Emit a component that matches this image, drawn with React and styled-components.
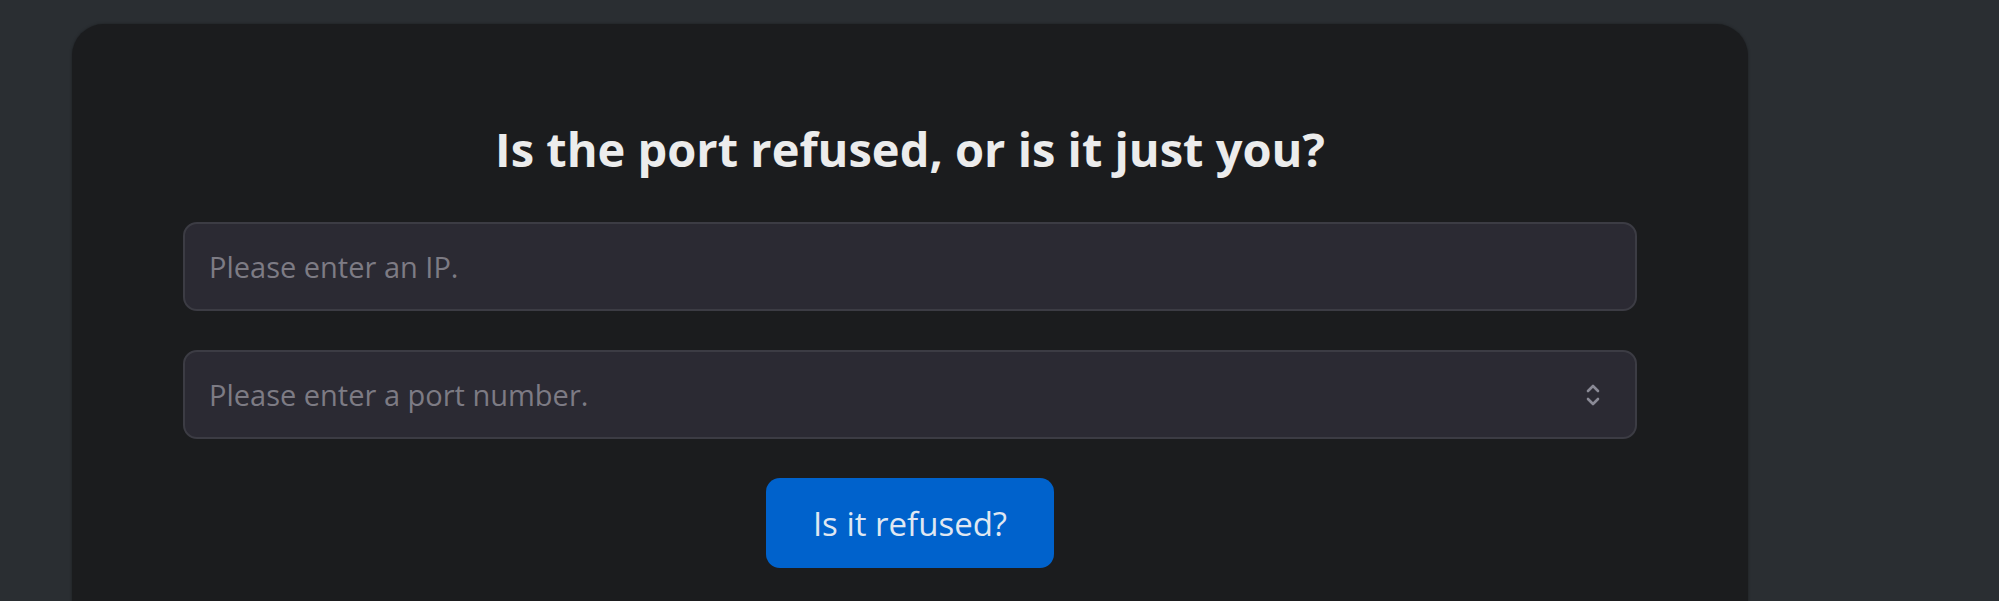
import React from 'react'
import styled, { createGlobalStyle } from 'styled-components'

const GlobalStyle = createGlobalStyle`
  html, body {
    margin: 0;
    padding: 0;
    background: #2a2e32;
    font-family: "Open Sans", "Noto Sans", sans-serif;
  }
`

const Page = styled.main`
  min-height: 601px;
  padding: 24px 251px 0 72px;
  box-sizing: border-box;
  border-bottom: 3px solid #45484c;
  overflow: hidden;
`

const Card = styled.section`
  background: #1b1c1e;
  border-radius: 32px 32px 0 0;
  box-shadow: 0 0 3px rgba(0, 0, 0, 0.35);
  padding: 98px 111px 40px;
  min-height: 560px;
  box-sizing: border-box;
  display: flex;
  flex-direction: column;
  align-items: center;
`

const Title = styled.h1`
  margin: 0 0 46px;
  color: #ececec;
  font-size: 47px;
  font-weight: 700;
  line-height: 54px;
  text-align: center;
`

const Form = styled.form`
  width: 100%;
  display: flex;
  flex-direction: column;
  align-items: center;
  gap: 39px;
`

const Field = styled.label`
  width: 100%;
  height: 89px;
  box-sizing: border-box;
  display: flex;
  align-items: center;
  padding: 0 34px 0 24px;
  background: #2b2a33;
  border: 2px solid #3c3c44;
  border-radius: 14px;
  color: #8a8a96;
`

const Input = styled.input`
  flex: 1;
  min-width: 0;
  border: 0;
  outline: none;
  background: transparent;
  color: #e6e6ea;
  font-family: "Open Sans", "Noto Sans", sans-serif;
  font-size: 29px;
  padding: 0;

  &::placeholder {
    color: #7d7b84;
  }
`

const Button = styled.button`
  width: 288px;
  height: 90px;
  border: 0;
  border-radius: 14px;
  background: #0062cc;
  color: #dfe7f2;
  font-family: "Open Sans", "Noto Sans", sans-serif;
  font-size: 33px;
  cursor: pointer;
`

const Spinner = () => (
  <svg width="16" height="24" viewBox="0 0 16 24" fill="none" stroke="currentColor"
    strokeWidth="2.6" strokeLinecap="round" strokeLinejoin="round">
    <path d="M3 8 L8 3 L13 8" />
    <path d="M3 16 L8 21 L13 16" />
  </svg>
)

const App = () => {
  return (
    <>
      <GlobalStyle />
      <Page>
        <Card>
          <Title>Is the port refused, or is it just you?</Title>
          <Form onSubmit={(e) => e.preventDefault()}>
            <Field>
              <Input type="text" placeholder="Please enter an IP." />
            </Field>
            <Field>
              <Input type="text" inputMode="numeric" placeholder="Please enter a port number." />
              <Spinner />
            </Field>
            <Button type="submit">Is it refused?</Button>
          </Form>
        </Card>
      </Page>
    </>
  )
}

export default App
